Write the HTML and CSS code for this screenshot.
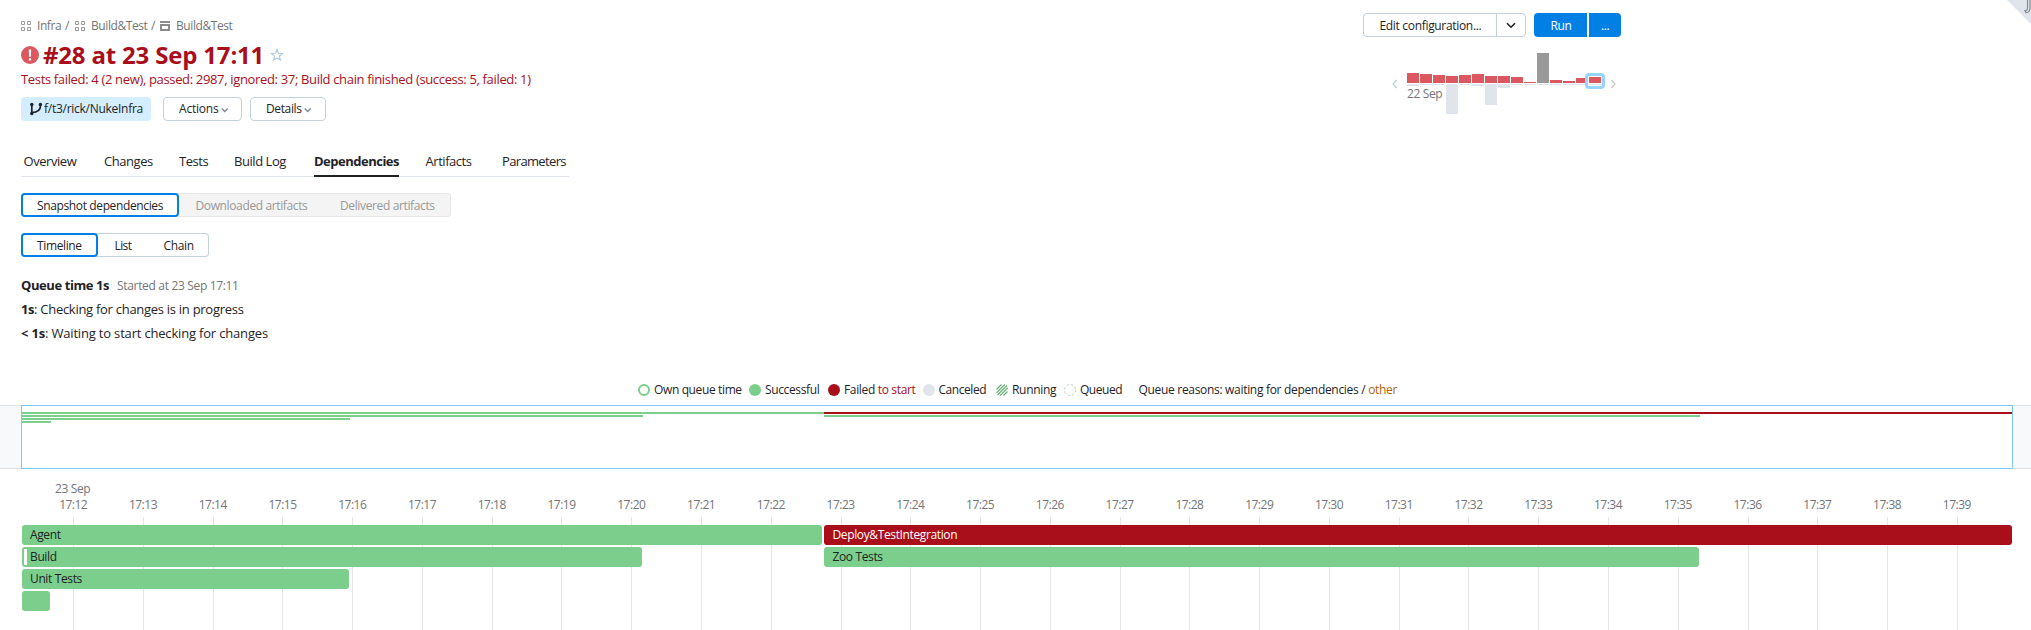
FILE: index.html
```
<!DOCTYPE html>
<html lang="en">
<head>
<meta charset="utf-8">
<title>#28 at 23 Sep 17:11</title>
<link rel="stylesheet" href="styles.css">
</head>
<body>
<svg class="corner" width="24" height="24" viewBox="0 0 24 24"><path d="M0 0h24v24z" fill="#dfe5eb"/><path d="M20.500 0v8.500q-.5 2.500-2.500 2.200l1 2q3.500-.2 4-3.700V0" fill="none" stroke="#85898d" stroke-width="1.200"/></svg>
<header class="header">
  <div class="summary">
    <nav class="crumbs">
      <svg class="crumb-icon" width="12" height="12" viewBox="0 0 12 12"><path d="M.5 1.500h3v3h-3zM6.500 1.500h3v3h-3zM.5 7.500h3v3h-3zM6.500 7.500h3v3h-3z" fill="none" stroke="#999"/></svg>
      <span class="crumb crumb-root">Infra</span><span class="slash">/</span>
      <svg class="crumb-icon" width="12" height="12" viewBox="0 0 12 12"><path d="M.5 1.500h3v3h-3zM6.500 1.500h3v3h-3zM.5 7.500h3v3h-3zM6.500 7.500h3v3h-3z" fill="none" stroke="#999"/></svg>
      <span class="crumb crumb-project">Build&amp;Test</span><span class="slash slash-last">/</span>
      <svg class="crumb-icon" width="12" height="12" viewBox="0 0 12 12"><path d="M0 1h10v2H0zM0 4h10v7H0zM2 6v3h6V6z" fill="#8c8c8c" fill-rule="evenodd"/></svg>
      <span class="crumb">Build&amp;Test</span>
    </nav>
    <div class="title-row">
      <svg width="18" height="18" viewBox="0 0 18 18"><circle cx="9" cy="9" r="9" fill="#db5860"/><path d="M7.800 3.500h2.400l-.3 7.300H8.100zM7.900 12.200h2.200v2.200H7.900z" fill="#fff"/></svg>
      <h1 class="title">#28 at 23 Sep 17:11</h1>
      <svg class="star" width="14" height="14" viewBox="0 0 14 14"><path d="M7 1.600l1.500 3.700 4 .3-3.100 2.500 1 3.900L7 9.900 3.600 12l1-3.900L1.500 5.600l4-.3z" fill="none" stroke="#b0cbe3" stroke-width="1.200"/></svg>
    </div>
    <p class="status">Tests failed: 4 (2 new), passed: 2987, ignored: 37; Build chain finished (success: 5, failed: 1)</p>
    <div class="actions">
      <span class="branch"><svg width="14" height="14" viewBox="0 0 14 14"><path d="M2.800 2.500v9M11.500 2.500v1.200C11.500 7.500 8.500 10.200 3 10.500" fill="none" stroke="#1f2326" stroke-width="1.700"/><circle cx="2.800" cy="2.500" r="1.700" fill="#1f2326"/><circle cx="11.400" cy="2.500" r="1.700" fill="#1f2326"/><circle cx="2.800" cy="11.500" r="1.700" fill="#1f2326"/></svg><span>f/t3/rick/NukeInfra</span></span>
      <button class="button drop-actions"><span>Actions</span><svg width="8" height="6" viewBox="0 0 8 6"><path d="M.7 1.500l3 3 3-3" fill="none" stroke="#808a92" stroke-width="1.400"/></svg></button>
      <button class="button drop-details"><span>Details</span><svg width="8" height="6" viewBox="0 0 8 6"><path d="M.7 1.500l3 3 3-3" fill="none" stroke="#808a92" stroke-width="1.400"/></svg></button>
    </div>
  </div>
  <div class="controls">
    <div class="toolbar">
      <div class="split"><span class="split-main">Edit configuration...</span><span class="split-arrow"><svg width="10" height="7" viewBox="0 0 10 7"><path d="M1 1.200l4 4 4-4" fill="none" stroke="#1f2326" stroke-width="1.600"/></svg></span></div>
      <span class="run">Run</span><span class="run-more">...</span>
    </div>
    <div class="history">
      <svg class="prev" width="6" height="10" viewBox="0 0 6 10"><path d="M4.800 1L1 5l3.800 4" fill="none" stroke="#b8d1e5" stroke-width="1.300"/></svg>
      <div class="chart">
        <div class="build"><i class="fail" style="height:10px"></i><i class="queue" style="height:2px"></i></div>
        <div class="build"><i class="fail" style="height:9px"></i><i class="queue" style="height:1px"></i></div>
        <div class="build"><i class="fail" style="height:8px"></i><i class="queue" style="height:1px"></i></div>
        <div class="build"><i class="fail" style="height:7px"></i><i class="queue" style="height:30px"></i></div>
        <div class="build"><i class="fail" style="height:8px"></i><i class="queue" style="height:1px"></i></div>
        <div class="build"><i class="fail" style="height:9px"></i><i class="queue" style="height:2px"></i></div>
        <div class="build"><i class="fail" style="height:7px"></i><i class="queue" style="height:21px"></i></div>
        <div class="build"><i class="fail" style="height:7px"></i><i class="queue" style="height:4px"></i></div>
        <div class="build"><i class="fail" style="height:6px"></i><i class="queue" style="height:1px"></i></div>
        <div class="build"><i class="fail" style="height:1px"></i><i class="queue" style="height:1px"></i></div>
        <div class="build"><i class="fail canceled" style="height:30px"></i><i class="queue" style="height:1px"></i></div>
        <div class="build"><i class="fail" style="height:3px"></i><i class="queue" style="height:1px"></i></div>
        <div class="build"><i class="fail" style="height:2px"></i><i class="queue" style="height:1px"></i></div>
        <div class="build"><i class="fail" style="height:5px"></i><i class="queue" style="height:1px"></i></div>
        <div class="build current"><i class="fail" style="height:6px"></i><i class="queue" style="height:1px"></i></div>
        <span class="chart-date">22 Sep</span>
      </div>
      <svg class="next" width="6" height="10" viewBox="0 0 6 10"><path d="M1.200 1L5 5 1.200 9" fill="none" stroke="#c6ccd2" stroke-width="1.300"/></svg>
    </div>
  </div>
</header>

<nav class="tabs"><span>Overview</span><span>Changes</span><span>Tests</span><span>Build Log</span><span class="active">Dependencies</span><span>Artifacts</span><span class="parameters">Parameters</span></nav>

<div class="segments disabled"><span class="selected snapshot">Snapshot dependencies</span><span class="downloaded">Downloaded artifacts</span><span>Delivered artifacts</span></div>
<div class="segments views"><span class="selected timeline-view">Timeline</span><span class="list-view">List</span><span>Chain</span></div>

<section class="queue-info">
  <p><b>Queue time 1s</b><span class="started">Started at 23 Sep 17:11</span></p>
  <p><b>1s</b>: Checking for changes is in progress</p>
  <p class="waiting"><b>&lt; 1s</b>: Waiting to start checking for changes</p>
</section>

<div class="legend">
  <span class="key own"><i class="dot ring"></i>Own queue time</span>
  <span class="key ok"><i class="dot green"></i>Successful</span>
  <span class="key failed"><i class="dot red"></i>Failed&nbsp;<em class="to-start">to start</em></span>
  <span class="key cancel"><i class="dot gray"></i>Canceled</span>
  <span class="key running"><svg class="mark" width="12" height="12" viewBox="0 0 12 12"><path d="M.5 5.500l5-5M.5 8.800L8.800.5M1.500 11L11 1.500M4 11.700L11.700 4M7.500 11.500l4-4" stroke="#5dae6f" stroke-width="1.100"/></svg>Running</span>
  <span class="key queued"><svg class="mark" width="12" height="12" viewBox="0 0 12 12"><circle cx="6" cy="6" r="5.500" fill="none" stroke="#c3c9ce" stroke-dasharray="2.500 1.820"/></svg>Queued</span>
  <span class="reasons">Queue reasons: waiting for dependencies / <em class="other">other</em></span>
</div>

<div class="overview">
  <div class="window">
    <div class="mini"><i class="green" style="width:802px"></i><i class="red" style="width:1189px"></i></div>
    <div class="mini"><i class="green" style="width:621px"></i><i class="green second" style="width:876px"></i></div>
    <div class="mini"><i class="green" style="width:328px"></i></div>
    <div class="mini"><i class="green" style="width:29px"></i></div>
  </div>
</div>

<div class="axis">
  <div class="date">23 Sep</div>
  <div class="ticks"><span>17:12</span><span>17:13</span><span>17:14</span><span>17:15</span><span>17:16</span><span>17:17</span><span>17:18</span><span>17:19</span><span>17:20</span><span>17:21</span><span>17:22</span><span>17:23</span><span>17:24</span><span>17:25</span><span>17:26</span><span>17:27</span><span>17:28</span><span>17:29</span><span>17:30</span><span>17:31</span><span>17:32</span><span>17:33</span><span>17:34</span><span>17:35</span><span>17:36</span><span>17:37</span><span>17:38</span><span>17:39</span></div>
</div>
<div class="lanes">
  <div class="lane"><div class="bar" style="width:800px">Agent</div><div class="bar red" style="width:1188px">Deploy&amp;TestIntegration</div></div>
  <div class="lane"><div class="bar waited" style="width:620px">Build</div><div class="bar zoo" style="width:875px">Zoo Tests</div></div>
  <div class="lane"><div class="bar" style="width:327px">Unit Tests</div></div>
  <div class="lane"><div class="bar" style="width:28px"></div></div>
</div>
</body>
</html>
```
FILE: styles.css
```
*, *::before, *::after { box-sizing: border-box; }
body {
  position: relative;
  margin: 0;
  width: 2031px;
  height: 630px;
  overflow: hidden;
  background: #fff;
  color: #1f2326;
  font: 12px/24px "Open Sans", "Noto Sans", sans-serif;
  letter-spacing: -0.37px;
  white-space: nowrap;
}
svg { display: block; flex: none; }
p, h1 { margin: 0; }
em, i { font-style: normal; }
button { font: inherit; letter-spacing: inherit; color: inherit; }
.corner { position: absolute; top: 0; right: 0; }

.header { display: grid; grid-template-columns: 1342px 300px; height: 145px; padding-left: 21px; }
.summary { padding-top: 16px; }
.crumbs { display: flex; align-items: center; height: 19px; color: #737577; }
.crumb-icon { width: 12px; height: 12px; }
.crumb { margin-left: 4px; letter-spacing: -0.42px; }
.crumb-root { width: 24px; }
.crumb-project { width: 56px; }
.slash { width: 5px; margin: 0 5px 0 4px; }
.slash-last { margin-right: 4px; }
.title-row { display: flex; align-items: center; height: 30px; margin-top: 5px; }
.title { width: 227px; padding-left: 4px; color: #a90f1a; font-size: 24px; line-height: 30px; font-weight: 700; letter-spacing: -0.18px; }
.star { margin-left: 4px; }
.status { height: 18px; color: #a90f1a; font-size: 13px; line-height: 18px; letter-spacing: -0.34px; }
.actions { display: flex; height: 24px; margin-top: 9px; }
.branch { display: flex; align-items: center; width: 130px; margin-right: 12px; padding-left: 8px; border-radius: 4px; background: #d4edff; letter-spacing: -0.27px; }
.branch span { margin-left: 1px; }
.button { display: flex; align-items: center; gap: 2px; padding: 0 0 0 15px; border: 1px solid #c3d1db; border-radius: 4px; background: #fff; line-height: 22px; }
.button svg { margin-top: 2px; }
.drop-actions { width: 79px; margin-right: 8px; letter-spacing: -0.2px; }
.drop-details { width: 76px; }

.toolbar { display: flex; height: 24px; margin-top: 13px; }
.split { display: flex; width: 163px; margin-right: 8px; border: 1px solid #c3d1db; border-radius: 4px; line-height: 24px; }
.split-main { width: 133px; padding-left: 15.500px; border-right: 1px solid #c3d1db; letter-spacing: -0.32px; }
.split-arrow { display: flex; flex: 1; align-items: center; justify-content: center; }
.run, .run-more { background: #0080e5; color: #fff; line-height: 26px; }
.run { width: 53px; padding-left: 16.500px; border-radius: 4px 0 0 4px; }
.run-more { width: 32px; margin-left: 2px; padding-left: 12px; border-radius: 0 4px 4px 0; }
.history { display: flex; margin-top: 16px; padding-left: 29px; }
.prev { margin: 26px 9px 0 0; }
.next { margin: 26px 0 0 9px; }
.chart { position: relative; display: flex; gap: 1px; height: 62px; }
.build { display: grid; grid-template-rows: 30px auto; row-gap: 1px; width: 12px; align-items: start; }
.fail { align-self: end; background: #db5860; }
.canceled { background: #999; }
.queue { background: #dfe5eb; }
.current { position: relative; }
.current::after { content: ""; position: absolute; left: -4px; top: 20px; width: 20px; height: 16px; border: 3px solid #99d3ff; border-radius: 4px; }
.chart-date { position: absolute; left: 0; top: 29px; color: #737577; }

.tabs { display: grid; grid-template-columns: 80.500px 75px 55px 80px 111.500px 76.500px 66px; justify-items: start; width: 548px; height: 32px; margin-left: 21px; padding-left: 2.500px; box-shadow: inset 0 -1px #dfe5eb; font-size: 13px; line-height: 32px; letter-spacing: -0.45px; }
.active { font-weight: 700; letter-spacing: -0.5px; box-shadow: inset 0 -2px #1f2326; }
.parameters { letter-spacing: -0.65px; }

.segments { display: flex; height: 24px; margin: 16px 0 0 21px; border-radius: 4px; line-height: 25px; }
.selected { height: 24px; margin-right: 16.500px; padding-left: 14px; border: 2px solid #0080e5; border-radius: 4px; background: #fff; color: #1f2326; line-height: 21px; }
.disabled { width: 430px; background: #f4f4f4; color: #999; box-shadow: inset 0 0 0 1px #e7e7e7; }
.snapshot { width: 158px; }
.downloaded { width: 144.500px; }
.views { width: 188px; box-shadow: inset 0 0 0 1px #c3d1db; }
.timeline-view { width: 77px; }
.list-view { width: 49px; letter-spacing: -0.6px; }

.queue-info { margin: 16px 0 0 21px; height: 105px; font-size: 13px; letter-spacing: -0.28px; }
.queue-info p { height: 24px; }
.queue-info b { letter-spacing: -0.42px; }
.started { margin-left: 8px; color: #737577; font-size: 12px; letter-spacing: -0.33px; }
.queue-info .waiting, .queue-info .waiting b { letter-spacing: -0.18px; }

.legend { display: flex; height: 27px; padding-left: 638px; line-height: 24px; }
.key { display: flex; align-items: center; height: 24px; }
.dot { width: 12px; height: 12px; margin-right: 4px; border-radius: 50%; }
.mark { margin-right: 4px; }
.own { width: 111px; }
.ok { width: 79px; }
.failed { width: 94.500px; letter-spacing: -0.34px; }
.cancel { width: 73.500px; letter-spacing: -0.44px; }
.running { width: 68px; letter-spacing: -0.3px; }
.queued { width: 74.500px; letter-spacing: -0.46px; }
.reasons { letter-spacing: -0.31px; }
.ring { border: 2px solid #7bce8b; }
.green { background: #7bce8b; }
.red { background: #a90f1a; }
.gray { background: #dfe5eb; }
.to-start { color: #a90f1a; }
.other { color: #b35f00; }

.overview { height: 64px; padding: 0 18px 0 21px; border: solid #dfe1e5; border-width: 1px 0; background: #f7f9fa; }
.window { height: 64px; margin-top: -1px; padding-top: 6px; border: 1px solid #7cc8ff; background: #fff; }
.mini { display: flex; height: 2px; margin-bottom: 1px; }
.second { margin-left: 181px; }

.axis { height: 48px; padding-top: 12px; color: #737577; line-height: 16px; }
.date { padding-left: 55px; }
.ticks { display: flex; padding-left: 38.300px; }
.ticks span { width: 69.780px; text-align: center; letter-spacing: -0.5px; }

.lanes { position: relative; height: 113px; padding: 8px 0 0 22px; }
.lanes::before { content: ""; position: absolute; z-index: -1; left: 73px; top: 0; bottom: 0; width: 1886px; background: repeating-linear-gradient(to right, #e3e7ec 0 1px, transparent 1px 69.775px); }
.lane { display: flex; gap: 2px; height: 20px; margin-bottom: 2px; }
.bar { position: relative; padding-left: 8px; border-radius: 3px; background: #7bce8b; line-height: 20px; }
.bar.red { padding-left: 8.500px; background: #a90f1a; color: #fff; }
.zoo { margin-left: 180px; padding-left: 8.500px; }
.waited::before { content: ""; position: absolute; left: 2px; top: 2px; width: 3px; height: 16px; background: #fff; }
```
